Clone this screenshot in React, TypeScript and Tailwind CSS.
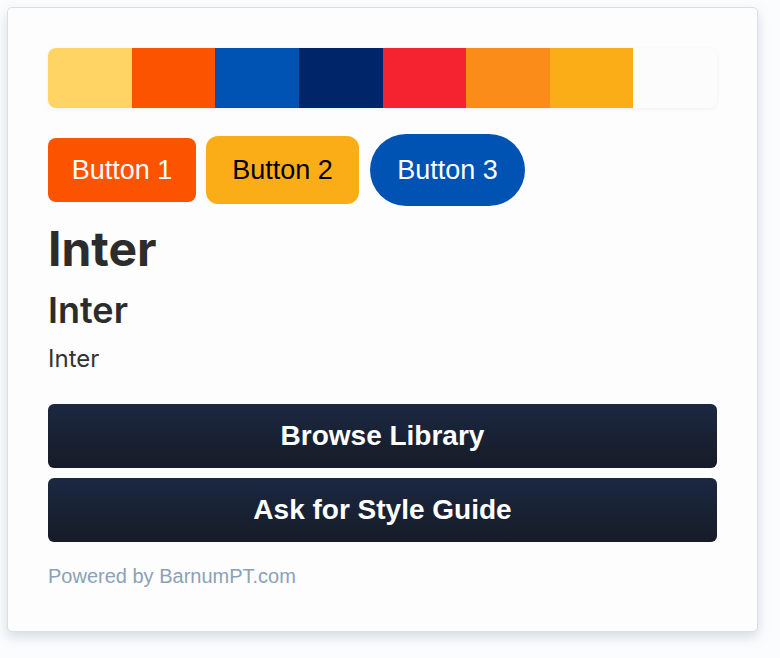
const swatches = [
  'bg-[#ffd465]',
  'bg-[#fc5300]',
  'bg-[#0052b3]',
  'bg-[#00266a]',
  'bg-[#f5222f]',
  'bg-[#fb8c19]',
  'bg-[#fbad18]',
  'bg-[#fcfcfc]',
];

export default function App() {
  return (
    <div className="min-h-[658px] bg-[#fbfcfd] pt-[7px] pl-[7px]">
      {/* Style card */}
      <div className="w-[751px] rounded-[5px] border border-[#d6e0e7] bg-[#fdfdfd] px-10 pt-10 pb-[43px] shadow-[0_5px_12px_rgba(80,110,140,0.22)]">
        {/* Palette */}
        <div className="flex h-[60px] overflow-hidden rounded-lg shadow-[0_1px_4px_rgba(0,0,0,0.06)]">
          {swatches.map((c) => (
            <div key={c} className={`flex-1 ${c}`} />
          ))}
        </div>

        {/* Sample buttons */}
        <div className="mt-[26px] flex items-center gap-[10px] font-['Liberation_Sans',Arial,sans-serif] text-[27px]">
          <button className="flex h-[64px] w-[148px] items-center justify-center rounded-lg bg-[#fc5300] text-white">
            Button 1
          </button>
          <button className="flex h-[68px] w-[153px] items-center justify-center rounded-xl bg-[#fbad18] text-black">
            Button 2
          </button>
          <button className="ml-px flex h-[72px] w-[155px] items-center justify-center rounded-full bg-[#0052b3] text-white">
            Button 3
          </button>
        </div>

        {/* Type scale */}
        <div className="font-['Inter',sans-serif] text-[#2c2c2c]">
          <h1 className="mt-[14px] text-[48px] leading-[58px] font-bold">Inter</h1>
          <h2 className="mt-[10px] text-[36px] leading-[44px] font-semibold">Inter</h2>
          <p className="mt-3 text-[24px] leading-[29px] text-[#333333]">Inter</p>
        </div>

        {/* Actions */}
        <div className="mt-[31px] flex flex-col gap-[10px] font-['Liberation_Sans',Arial,sans-serif]">
          <button className="h-[64px] w-full rounded-md bg-gradient-to-b from-[#1b2842] to-[#161c27] text-[28px] font-bold text-white">
            Browse Library
          </button>
          <button className="h-[64px] w-full rounded-md bg-gradient-to-b from-[#1b2842] to-[#161c27] text-[28px] font-bold text-white">
            Ask for Style Guide
          </button>
        </div>

        <p className="mt-[23px] font-['Liberation_Sans',Arial,sans-serif] text-[20px] leading-[23px] text-[#8ca1b7]">
          Powered by BarnumPT.com
        </p>
      </div>
    </div>
  );
}
